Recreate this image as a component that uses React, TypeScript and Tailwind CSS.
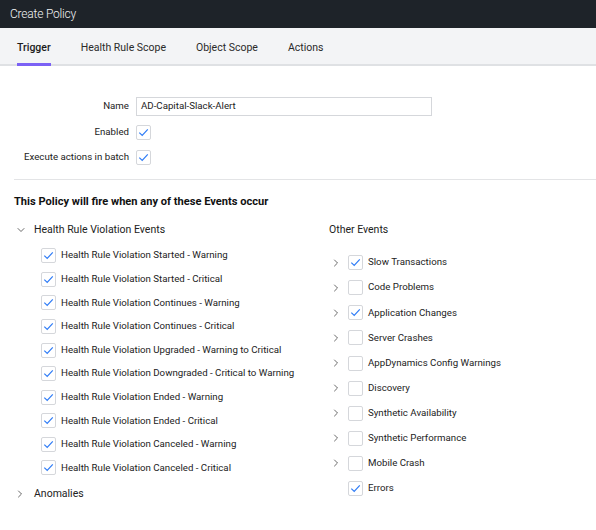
import { ChevronDown, ChevronRight } from "lucide-react";

const healthEvents = [
  "Health Rule Violation Started - Warning",
  "Health Rule Violation Started - Critical",
  "Health Rule Violation Continues - Warning",
  "Health Rule Violation Continues - Critical",
  "Health Rule Violation Upgraded - Warning to Critical",
  "Health Rule Violation Downgraded - Critical to Warning",
  "Health Rule Violation Ended - Warning",
  "Health Rule Violation Ended - Critical",
  "Health Rule Violation Canceled - Warning",
  "Health Rule Violation Canceled - Critical",
];

const otherEvents: { label: string; checked: boolean; expandable: boolean }[] = [
  { label: "Slow Transactions", checked: true, expandable: true },
  { label: "Code Problems", checked: false, expandable: true },
  { label: "Application Changes", checked: true, expandable: true },
  { label: "Server Crashes", checked: false, expandable: true },
  { label: "AppDynamics Config Warnings", checked: false, expandable: true },
  { label: "Discovery", checked: false, expandable: true },
  { label: "Synthetic Availability", checked: false, expandable: true },
  { label: "Synthetic Performance", checked: false, expandable: true },
  { label: "Mobile Crash", checked: false, expandable: true },
  { label: "Errors", checked: true, expandable: false },
];

function Check({ checked }: { checked: boolean }) {
  return (
    <span className="flex h-[15px] w-[15px] shrink-0 items-center justify-center rounded-[2px] border border-[#d5d7db] bg-white">
      {checked && (
        <svg viewBox="0 0 14 14" className="h-[13px] w-[13px]">
          <path d="M2.5 7.2 L5.6 10.2 L11.6 3.6" fill="none" stroke="#2f7cf6" strokeWidth="1.3" />
        </svg>
      )}
    </span>
  );
}

export default function App() {
  const tabs = ["Trigger", "Health Rule Scope", "Object Scope", "Actions"];
  return (
    <div className="h-[530px] w-[596px] overflow-hidden bg-white font-['Roboto',sans-serif] text-[9.7px] text-[#222]">
      <div className="flex h-[28px] items-center bg-[#1e2329] px-[10px] text-[12px] font-light tracking-[-0.2px] text-[#f2f3f5]">
        Create Policy
      </div>
      <div className="flex h-[38px] items-stretch gap-[30px] border-b-2 border-[#dfe1e4] bg-[#f3f4f6] pl-[17px] text-[10.5px]">
        {tabs.map((t, i) => (
          <div
            key={t}
            className={
              i === 0
                ? "-mb-[2px] flex items-center border-b-[3px] border-[#7b61f5] pt-[5px] font-medium text-[#1a1a1a]"
                : "-mb-[2px] flex items-center border-b-[3px] border-transparent pt-[5px] text-[#2a2a2a]"
            }
          >
            {t}
          </div>
        ))}
      </div>

      <div className="grid grid-cols-[129px_1fr] items-center gap-x-[7px] gap-y-[6.5px] pt-[31px]">
        <div className="text-right">Name</div>
        <div className="flex h-[19px] w-[296px] items-center border border-[#d5d7db] px-[4px]">AD-Capital-Slack-Alert</div>
        <div className="text-right">Enabled</div>
        <div className="flex h-[19px] items-center">
          <Check checked />
        </div>
        <div className="text-right">Execute actions in batch</div>
        <div className="flex h-[19px] items-center">
          <Check checked />
        </div>
      </div>

      <div className="ml-[14px] mt-[12px] border-t border-[#e3e4e6]" />
      <div className="ml-[14px] mt-[14px] text-[11.1px] font-bold text-[#111]">
        This Policy will fire when any of these Events occur
      </div>

      <div className="mt-[9px] flex">
        <div className="w-[316px] shrink-0">
          <div className="flex h-[20px] items-center">
            <ChevronDown className="ml-[15px] h-[12px] w-[12px] text-[#444]" strokeWidth={1.6} />
            <span className="ml-[7px] text-[10.5px]">Health Rule Violation Events</span>
          </div>
          <div className="mt-[7px] flex flex-col gap-[5.6px] pl-[41px]">
            {healthEvents.map((e) => (
              <div key={e} className="flex h-[18px] items-center gap-[5px]">
                <Check checked />
                <span>{e}</span>
              </div>
            ))}
          </div>
          <div className="mt-[7px] flex h-[20px] items-center">
            <ChevronRight className="ml-[14px] h-[12px] w-[12px] text-[#444]" strokeWidth={1.6} />
            <span className="ml-[8px] text-[10.5px]">Anomalies</span>
          </div>
        </div>
        <div className="pl-[13px]">
          <div className="flex h-[20px] items-center text-[10.5px]">Other Events</div>
          <div className="mt-[14px] flex flex-col gap-[7.1px]">
            {otherEvents.map((o) => (
              <div key={o.label} className="flex h-[18px] items-center">
                <span className="flex w-[19px] justify-start pl-[1px]">
                  {o.expandable && <ChevronRight className="h-[12px] w-[12px] text-[#444]" strokeWidth={1.6} />}
                </span>
                <Check checked={o.checked} />
                <span className="ml-[5px]">{o.label}</span>
              </div>
            ))}
          </div>
        </div>
      </div>
    </div>
  );
}
